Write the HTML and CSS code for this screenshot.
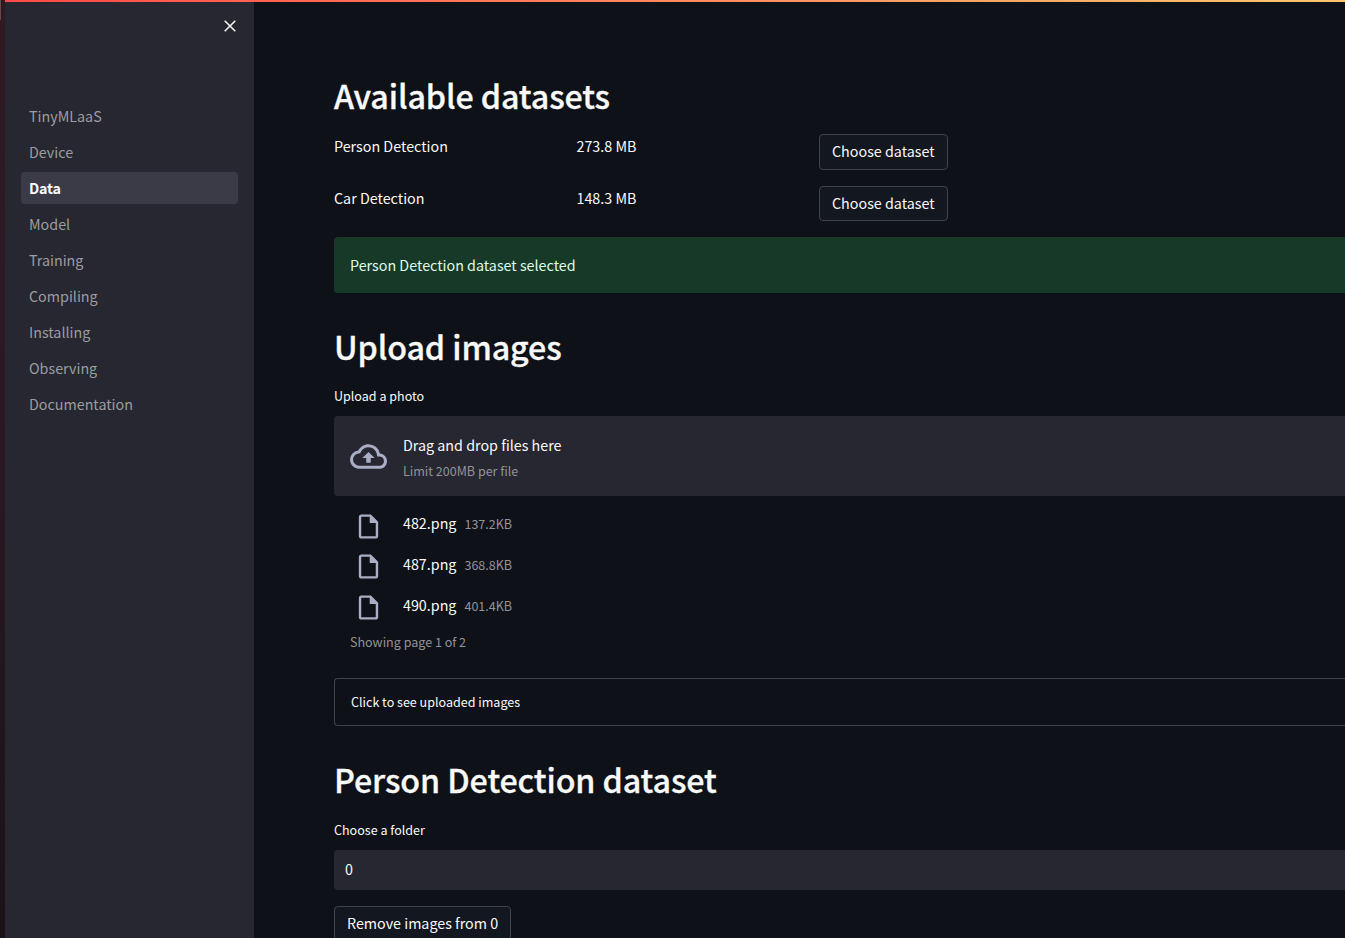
FILE: index.html
```html
<!DOCTYPE html>
<html lang="en">
<head>
<meta charset="utf-8">
<title>TinyMLaaS</title>
<link rel="stylesheet" href="styles.css">
</head>
<body>
<div class="app">
  <div class="backdrop"><span class="backdrop-mark"></span></div>
  <div class="window">
    <div class="decoration"></div>
    <div class="layout">
      <aside class="sidebar">
        <button class="close" aria-label="Close">
          <svg viewBox="0 0 12 12" width="12" height="12"><path d="M.7 .7 L11.3 11.3 M11.3 .7 L.7 11.3" fill="none" stroke="#fafafa" stroke-width="1.5"/></svg>
        </button>
        <nav class="nav">
          <a class="nav-item">TinyMLaaS</a>
          <a class="nav-item">Device</a>
          <a class="nav-item active">Data</a>
          <a class="nav-item">Model</a>
          <a class="nav-item">Training</a>
          <a class="nav-item">Compiling</a>
          <a class="nav-item">Installing</a>
          <a class="nav-item">Observing</a>
          <a class="nav-item">Documentation</a>
        </nav>
      </aside>
      <main class="main">
        <h2 class="heading">Available datasets</h2>
        <div class="datasets">
          <div class="dataset"><span>Person Detection</span><span>273.8 MB</span><button class="btn tall">Choose dataset</button></div>
          <div class="dataset"><span>Car Detection</span><span>148.3 MB</span><button class="btn">Choose dataset</button></div>
        </div>
        <div class="alert">Person Detection dataset selected</div>
        <h2 class="heading upload-heading">Upload images</h2>
        <div class="label">Upload a photo</div>
        <div class="dropzone">
          <svg class="cloud" viewBox="0 0 24 24" width="37" height="37" fill="#a9aec4"><path d="M19.35 10.04A7.49 7.49 0 0012 4C9.11 4 6.6 5.64 5.35 8.04A5.994 5.994 0 000 14c0 3.31 2.69 6 6 6h13c2.76 0 5-2.24 5-5 0-2.64-2.05-4.78-4.65-4.96zM19 18H6c-2.21 0-4-1.79-4-4 0-2.05 1.53-3.76 3.56-3.97l1.07-.11.5-.95A5.469 5.469 0 0112 6c2.62 0 4.88 1.86 5.39 4.43l.3 1.5 1.53.11A2.98 2.98 0 0122 15c0 1.65-1.35 3-3 3zM8 13h2.55v3h2.9v-3H16l-4-4z"/></svg>
          <div class="drop-text"><span>Drag and drop files here</span><small class="muted">Limit 200MB per file</small></div>
        </div>
        <div class="files">
          <div class="file"><svg viewBox="0 0 24 24" width="29" height="29" fill="#a9aec4"><path d="M14 2H6c-1.1 0-1.99.9-1.99 2L4 20c0 1.1.89 2 1.99 2H18c1.1 0 2-.9 2-2V8l-6-6zM6 20V4h7v5h5v11H6z"/></svg><span class="file-name">482.png</span><small class="muted">137.2KB</small></div>
          <div class="file"><svg viewBox="0 0 24 24" width="29" height="29" fill="#a9aec4"><path d="M14 2H6c-1.1 0-1.99.9-1.99 2L4 20c0 1.1.89 2 1.99 2H18c1.1 0 2-.9 2-2V8l-6-6zM6 20V4h7v5h5v11H6z"/></svg><span class="file-name">487.png</span><small class="muted">368.8KB</small></div>
          <div class="file"><svg viewBox="0 0 24 24" width="29" height="29" fill="#a9aec4"><path d="M14 2H6c-1.1 0-1.99.9-1.99 2L4 20c0 1.1.89 2 1.99 2H18c1.1 0 2-.9 2-2V8l-6-6zM6 20V4h7v5h5v11H6z"/></svg><span class="file-name">490.png</span><small class="muted">401.4KB</small></div>
          <small class="muted paging">Showing page 1 of 2</small>
        </div>
        <div class="expander">Click to see uploaded images</div>
        <h2 class="heading folder-heading">Person Detection dataset</h2>
        <div class="label">Choose a folder</div>
        <div class="select">0</div>
        <button class="btn remove">Remove images from 0</button>
      </main>
    </div>
  </div>
</div>
</body>
</html>
```
FILE: styles.css
```css
* { box-sizing: border-box; }

body {
  margin: 0;
  height: 938px;
  overflow: hidden;
  background: #0e1117;
  color: #fafafa;
  font-family: "Noto Sans CJK JP", "Noto Sans", sans-serif;
  font-size: 14.3px;
  line-height: 24px;
}

.app { display: flex; height: 938px; }

.backdrop {
  width: 5px;
  flex: none;
  background: linear-gradient(#2f1a22, #2c1926 35%, #1b1218);
}
.backdrop-mark { display: block; width: 1px; height: 20px; background: #64474f; }

.window { flex: 1; min-width: 0; display: flex; flex-direction: column; }
.decoration { height: 2px; flex: none; background: linear-gradient(90deg, #ff4b4b, #ffc66e); }
.layout { flex: 1; min-height: 0; display: flex; }

.sidebar {
  width: 249px;
  flex: none;
  background: #262730;
  padding: 18px 16px 0;
}
.close {
  display: block;
  width: 12px;
  height: 12px;
  margin: 0 2px 0 auto;
  padding: 0;
  border: 0;
  background: none;
}
.close svg { display: block; }

.nav { display: flex; flex-direction: column; gap: 4px; margin-top: 68px; }
.nav-item {
  height: 32px;
  padding: 0 8px;
  border-radius: 4px;
  line-height: 32px;
  color: #9c9da1;
}
.nav-item.active { background: #3b3b47; color: #fafafa; font-weight: 600; letter-spacing: -0.2px; }

.main {
  flex: 1;
  min-width: 0;
  padding: 72px 0 0 80px;
  overflow: hidden;
}

.heading {
  margin: 0;
  height: 43px;
  font-size: 32.24px;
  font-weight: 500;
  line-height: 43px;
  letter-spacing: -0.11px;
  -webkit-text-stroke: 0.3px #fafafa;
}
.upload-heading { margin-top: 32px; }
.folder-heading { margin-top: 32px; }

.datasets { display: grid; gap: 16px; margin-top: 17px; }
.dataset { display: grid; grid-template-columns: 242.5px 242.5px auto; justify-content: start; align-items: start; }

.btn {
  display: block;
  height: 35px;
  padding: 0 12px 1px;
  border: 1px solid #41444c;
  border-radius: 4px;
  background: #131720;
  color: #fafafa;
  font: inherit;
  line-height: 32px;
  white-space: nowrap;
}
.btn.tall { height: 36px; padding-bottom: 2px; }

.alert {
  height: 56px;
  margin-top: 16px;
  padding: 16px;
  border-radius: 4px 0 0 4px;
  background: #173928;
  color: #dffde9;
}

.label { height: 20px; margin-top: 18px; font-size: 12.54px; line-height: 20px; }
.folder-heading + .label { margin-top: 19px; }
.muted { font-size: 12.54px; line-height: 20px; color: #929397; }

.dropzone {
  display: flex;
  align-items: center;
  gap: 16px;
  height: 80px;
  margin-top: 10px;
  padding: 0 16px;
  border-radius: 4px 0 0 4px;
  background: #262730;
}
.drop-text { display: flex; flex-direction: column; gap: 4px; padding-top: 2px; }

.files { padding: 8px 16px 0; }
.file { display: flex; align-items: center; height: 41px; padding-left: 4px; }
.file svg { margin-top: 3px; }
.file:nth-child(n+2) svg { margin-top: 1px; }
.file-name { margin: -4px 8px 0 20px; }
.file .muted { margin-top: -2px; }
.paging { display: block; margin-top: 5px; }

.expander {
  height: 48px;
  margin-top: 26px;
  padding: 0 16px;
  border: 1px solid #41434a;
  border-right: 0;
  border-radius: 4px 0 0 4px;
  font-size: 12.54px;
  line-height: 46px;
}

.select {
  height: 40px;
  margin-top: 10px;
  padding: 0 11px;
  border-radius: 4px 0 0 4px;
  background: #262730;
  line-height: 38px;
}
.remove { margin-top: 16px; }
```
